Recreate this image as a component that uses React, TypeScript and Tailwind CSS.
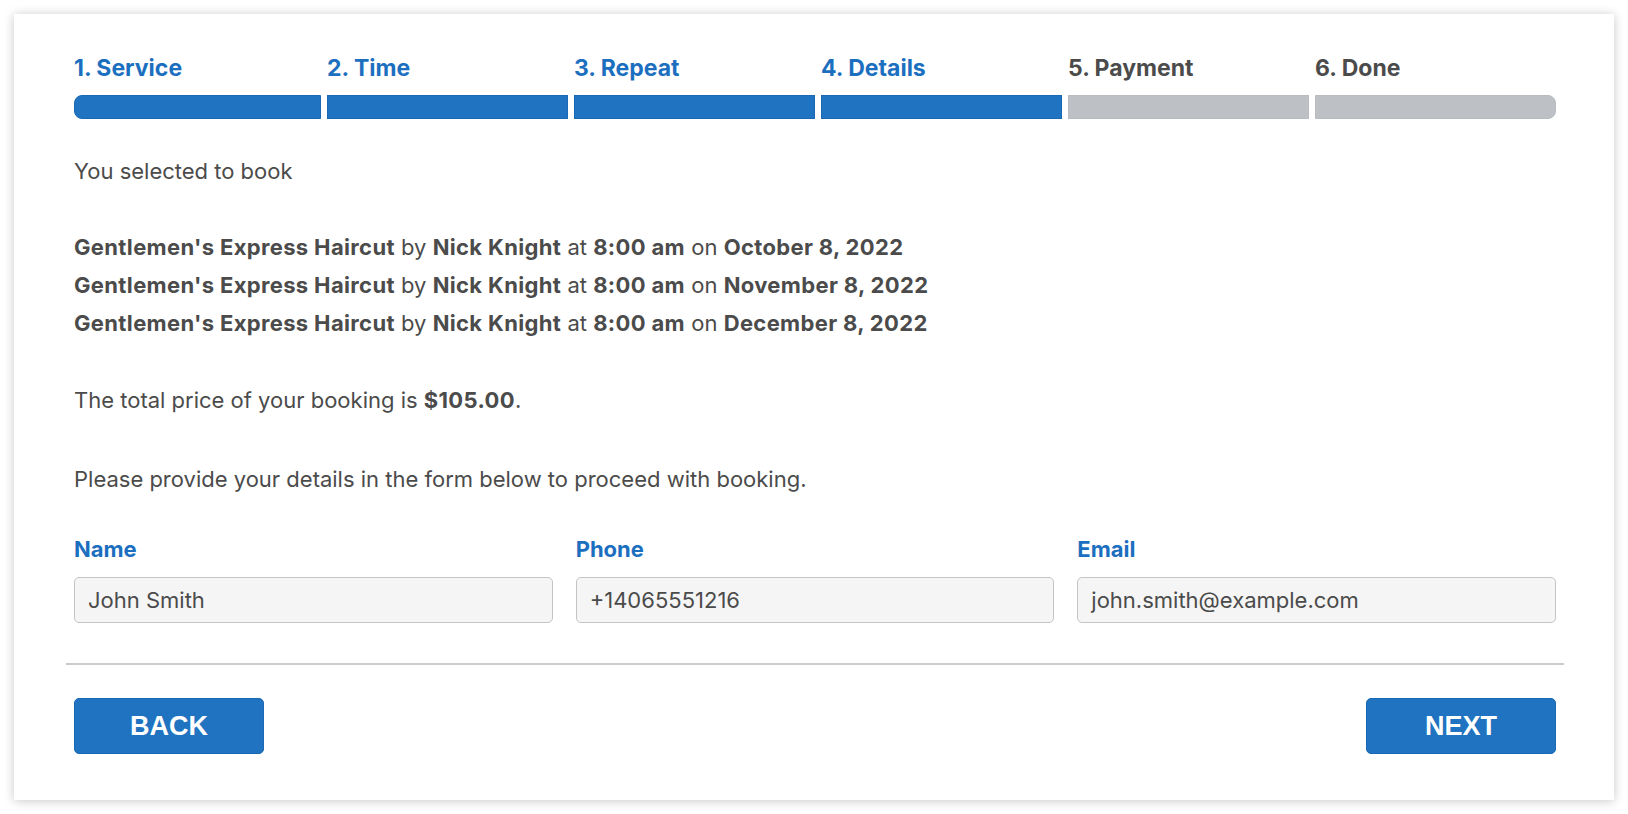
const STEPS = [
  { label: '1. Service', done: true },
  { label: '2. Time', done: true },
  { label: '3. Repeat', done: true },
  { label: '4. Details', done: true },
  { label: '5. Payment', done: false },
  { label: '6. Done', done: false },
]

const BOOKINGS = ['October 8, 2022', 'November 8, 2022', 'December 8, 2022']

const FIELDS = [
  { label: 'Name', value: 'John Smith' },
  { label: 'Phone', value: '+14065551216' },
  { label: 'Email', value: 'john.smith@example.com' },
]

function B({ children }: { children: React.ReactNode }) {
  return <b className="tracking-[0.35px]">{children}</b>
}

export default function App() {
  return (
    <div className="min-h-screen bg-white p-[14px] font-['Inter','Liberation_Sans',sans-serif] text-[#4b4b4b]">
      {/* Card */}
      <div className="w-[1600px] h-[786px] bg-white shadow-[0_1px_10px_rgba(0,0,0,0.22)] pl-[60px] pr-[58px] pt-[39px]">
        {/* Progress */}
        <div className="grid grid-cols-[247px_repeat(5,1fr)] gap-[6px]">
          {STEPS.map((s, i) => (
            <div key={s.label} className="flex flex-col">
              <span
                className={`text-[23px] font-bold leading-[30px] ${s.done ? 'text-[#1c6fbf]' : 'text-[#4b4b4b]'}`}
              >
                {s.label}
              </span>
              <div
                className={`mt-[12px] h-[24px] border ${
                  s.done ? 'bg-[#2073c0] border-[#1b68b5]' : 'bg-[#bdc1c5] border-[#b8bcc0]'
                } ${i === 0 ? 'rounded-l-[8px]' : ''} ${i === STEPS.length - 1 ? 'rounded-r-[8px]' : ''}`}
              />
            </div>
          ))}
        </div>

        {/* Summary */}
        <div className="text-[22px] leading-[38px]">
          <p className="mt-[33px]">You selected to book</p>
          <div className="mt-[38px]">
            {BOOKINGS.map((d) => (
              <p key={d}>
                <B>Gentlemen's Express Haircut</B> by <B>Nick Knight</B> at <B>8:00 am</B> on <B>{d}</B>
              </p>
            ))}
          </div>
          <p className="mt-[39px]">
            The total price of your booking is <B>$105.00</B>.
          </p>
          <p className="mt-[41px]">Please provide your details in the form below to proceed with booking.</p>
        </div>

        {/* Form */}
        <div className="mt-[36px] grid grid-cols-3 gap-[23px]">
          {FIELDS.map((f) => (
            <div key={f.label} className="flex flex-col">
              <span className="text-[22px] font-bold leading-[30px] text-[#1c6fbf]">{f.label}</span>
              <div className="mt-[13px] h-[46px] flex items-center px-[13px] rounded-[5px] border border-[#c4c4c4] bg-[#f5f5f5] text-[22px]">
                {f.value}
              </div>
            </div>
          ))}
        </div>

        {/* Divider */}
        <div className="-mx-[8px] mt-[40px] h-[2px] bg-[#cbcbcb]" />

        {/* Buttons */}
        <div className="mt-[33px] flex justify-between">
          <button className="w-[190px] h-[56px] rounded-[5px] border border-[#1b68b5] bg-[#2073c0] text-white text-[27px] font-bold font-['Liberation_Sans',sans-serif]">
            BACK
          </button>
          <button className="w-[190px] h-[56px] rounded-[5px] border border-[#1b68b5] bg-[#2073c0] text-white text-[27px] font-bold font-['Liberation_Sans',sans-serif]">
            NEXT
          </button>
        </div>
      </div>
    </div>
  )
}
